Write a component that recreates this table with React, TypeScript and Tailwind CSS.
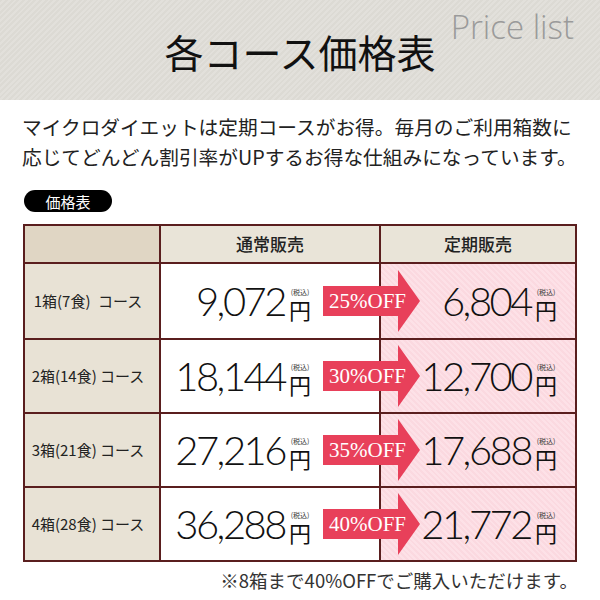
const rows = [
  { label: '1箱(7食)\u2002コース', normal: '9,072', off: '25%OFF', sub: '6,804' },
  { label: '2箱(14食) コース', normal: '18,144', off: '30%OFF', sub: '12,700' },
  { label: '3箱(21食) コース', normal: '27,216', off: '35%OFF', sub: '17,688' },
  { label: '4箱(28食) コース', normal: '36,288', off: '40%OFF', sub: '21,772' },
]

function Price({ value }: { value: string }) {
  return (
    <div className="flex items-end">
      <span className="font-['Lato',sans-serif] font-light text-[40px] leading-none tracking-[-2.5px] text-[#111]">
        {value}
      </span>
      <span className="flex flex-col items-center ml-[4px] mb-[2px]">
        <span className="text-[7px] leading-[7px] text-[#333] mb-[3px]">(税込)</span>
        <span className="text-[22px] leading-[20px] text-[#111]">円</span>
      </span>
    </div>
  )
}

function OffArrow({ text }: { text: string }) {
  return (
    <div className="absolute right-[-41px] top-1/2 -translate-y-1/2 z-10 w-[97px] h-[62px]">
      <svg width="97" height="62" viewBox="0 0 97 62" className="absolute inset-0">
        <path d="M0 16 H75 V0 L97 31 L75 62 V46 H0 Z" fill="#e8405a" />
      </svg>
      <span className="absolute left-[6px] top-1/2 -translate-y-1/2 font-['Liberation_Serif',serif] text-[21px] leading-none text-white whitespace-nowrap">
        {text}
      </span>
    </div>
  )
}

export default function App() {
  return (
    <div className="w-[600px] h-[600px] bg-white font-['Noto_Sans_CJK_JP',sans-serif] text-[#222] overflow-hidden">
      {/* Header */}
      <div className="relative h-[100px] flex items-center justify-center bg-[repeating-linear-gradient(135deg,#dcdad4_0px,#dcdad4_2px,#e2e0db_2px,#e2e0db_4px)]">
        <h1 className="text-[39px] leading-none text-[#111] mt-[2px]">各コース価格表</h1>
        <span className="absolute right-[26px] top-[10px] font-['Open_Sans',sans-serif] font-light text-[33px] leading-none text-[#9a9a9a]">
          Price list
        </span>
      </div>

      {/* Intro */}
      <p className="mt-[12px] px-[22px] text-[19.7px] leading-[30px] whitespace-nowrap text-[#222]">
        マイクロダイエットは定期コースがお得。毎月のご利用箱数に
        <br />
        応じてどんどん割引率がUPするお得な仕組みになっています。
      </p>

      {/* Label */}
      <div className="mt-[18px] ml-[24px] w-[88px] h-[22px] rounded-full bg-black flex items-center justify-center">
        <span className="text-white text-[15px] leading-none">価格表</span>
      </div>

      {/* Table */}
      <div className="mt-[12px] mx-[23px] border-2 border-[#5a1e1e] bg-[#5a1e1e] grid grid-cols-[134px_218px_194px] grid-rows-[36px_74px_72px_72px_72px] gap-[2px]">
        <div className="bg-[#e0d6c4]" />
        <div className="bg-[#e9e4d8] flex items-center justify-center text-[17px] font-medium text-[#222]">通常販売</div>
        <div className="bg-[#e9e4d8] flex items-center justify-center text-[17px] font-medium text-[#222]">定期販売</div>

        {rows.map((r) => (
          <div key={r.label} className="contents">
            <div className="bg-[#e8e2d5] flex items-center justify-center pr-[8px] text-[15px] text-[#222] whitespace-nowrap">
              {r.label}
            </div>
            <div className="relative bg-white flex items-center justify-end pr-[68px]">
              <Price value={r.normal} />
              <OffArrow text={r.off} />
            </div>
            <div className="bg-[repeating-linear-gradient(45deg,#fde1e7_0px,#fde1e7_2px,#fbd9e0_2px,#fbd9e0_4px)] flex items-center justify-end pr-[18px]">
              <Price value={r.sub} />
            </div>
          </div>
        ))}
      </div>

      {/* Note */}
      <p className="mt-[5px] pr-[22px] text-right text-[18.5px] leading-[26px] text-[#333]">
        ※8箱まで40%OFFでご購入いただけます。
      </p>
    </div>
  )
}
